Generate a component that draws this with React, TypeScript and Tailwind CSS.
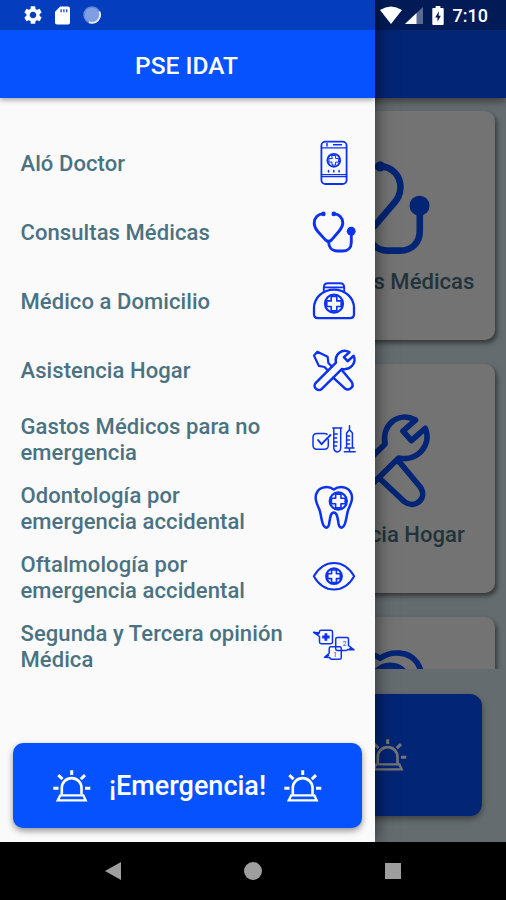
import type { ReactNode } from "react";
import clsx from "clsx";

type IconProps = { className?: string };

function Glyph({ className, children }: { className?: string; children: ReactNode }) {
  return (
    <svg
      viewBox="0 0 48 48"
      fill="none"
      stroke="currentColor"
      strokeWidth={2.3}
      strokeLinecap="round"
      strokeLinejoin="round"
      className={clsx("flex-shrink-0", className)}
    >
      {children}
    </svg>
  );
}

// Medical cross inside a ring, shared by several icons
function CrossBadge({ x, y, r }: { x: number; y: number; r: number }) {
  const s = r / 9;
  return (
    <g transform={`translate(${x} ${y}) scale(${s})`} strokeWidth={2.2 / s}>
      <circle r={9} />
      <path d="M-2.8 -7.2h5.6v4.4h4.4v5.6h-4.4v4.4h-5.6v-4.4h-4.4v-5.6h4.4z" strokeWidth={1.6 / s} />
    </g>
  );
}

function PhoneIcon({ className }: IconProps) {
  return (
    <Glyph className={className}>
      <rect x={11.4} y={2.6} width={25.2} height={42.4} rx={4} strokeWidth={1.8} />
      <path d="M11.4 8.8h25.2M11.4 35.6h25.2M11.4 37.6h25.2" strokeWidth={1.2} />
      <path d="M23.5 5.7h8M17 4.5v2.6" strokeWidth={1.5} />
      <circle cx={23.8} cy={21.3} r={6.4} strokeWidth={1.9} />
      <path d="M22 16.5h3.6v3h3v3.6h-3v3h-3.6v-3h-3v-3.6h3z" strokeWidth={1} />
      <path d="M18.5 31.6v1.4M23.8 31.6v1.4M29.1 31.6v1.4" strokeWidth={1.5} />
    </Glyph>
  );
}

function StethoscopeIcon({ className }: IconProps) {
  return (
    <Glyph className={className}>
      <g strokeWidth={2.9}>
        <path d="M13 5.9C8 6 4.2 10 4.2 15c0 3.6 1.4 5.8 3.6 8.5l7.6 8.4q3.1 3 6.2 0l7.6-8.9c2.3-2.7 3.6-4.6 3.6-8 0-5-3.8-9-8.8-9.1" />
        <path d="M18.6 33.8c0 5.2 3.2 9.2 8.6 9.2h5.4c5.2 0 8.7-3.5 8.7-8.6V24" />
      </g>
      <circle cx={13.4} cy={5.9} r={2.3} fill="currentColor" stroke="none" />
      <circle cx={23.8} cy={5.9} r={2.3} fill="currentColor" stroke="none" />
      <circle cx={41.2} cy={23.2} r={4.4} fill="currentColor" stroke="none" />
    </Glyph>
  );
}

function BagIcon({ className }: IconProps) {
  return (
    <Glyph className={className}>
      <path d="M8 41.2q-4-.2-4-4V31C4 20.5 13 12.6 24 12.6S44 20.5 44 31v6.2q0 3.8-4 4z" />
      <path d="M13.8 15.2V10.2q.2-4 4-4h12.4q3.8 0 4 4v5M14 10.4h20" strokeWidth={1.9} />
      <CrossBadge x={24} y={26.7} r={9} />
    </Glyph>
  );
}

function ToolsIcon({ className }: IconProps) {
  return (
    <Glyph className={className}>
      <g strokeWidth={2.5}>
        <path d="M39.4 6.2C32 2.2 24.4 8.2 26 16.7L5.8 36.8c-3.8 4 2 9.8 6 6L32 22.9c8.2 1.7 14.8-5.7 11.7-13.1L37.6 15.2l-3.7-4.1z" />
        <path d="M21.8 20.6l-3.4-3.6-.8-6.2L7.4 5.8 4 9.6l4.8 10.2 5.8 1.2 3.2 3.6" strokeWidth={2.2} />
        <path d="M32.2 24.5l9.4 11.3c3.2 5-2.4 9.8-7 6.4L23.3 31.6" />
      </g>
    </Glyph>
  );
}

function LabIcon({ className }: IconProps) {
  return (
    <Glyph className={className}>
      <g strokeWidth={1.5}>
        <path d="M18.3 24.5V30.3q0 4-4 4H7q-4 0-4-4V22.5q0-4 4-4h7.3q1.8 0 2.8.8" />
        <path d="M8 25l3.5 4.2 9-9.2" strokeWidth={1.9} />
        <path d="M22.8 13h9M23.8 13v20.3q.3 3.4 3.4 3.6 3.2-.2 3.5-3.6V13" />
        <path d="M24 19h3.2M24 23h2.6M24 27h3.2M24 31h2.6" />
        <path d="M39.5 10.8v4M36.6 33V18l2.9-3.2 2.9 3.2v15zM35 33h9M39.5 33v3.6M34.4 36.8h10.8" />
        <path d="M37 21h2.6M37 25h2.6M37 29h2.6" />
      </g>
    </Glyph>
  );
}

function ToothIcon({ className }: IconProps) {
  return (
    <Glyph className={className}>
      <path
        d="M23.8 5.4C19 2 11 2.2 7.6 7.2c-4 5.8-1 12.2 1.6 17.8 2.2 5.2 2 14.5 5.3 17.7 2 1.9 3.9.6 4.5-2.2.9-4.6 1-12 4.8-12s4 7.4 4.9 12c.6 2.8 2.6 4.1 4.5 2.2 3.3-3.2 3.1-12.5 5.3-17.7 2.6-5.6 5.6-12 1.5-17.8-3.4-5-11.4-5.2-16.2-1.8z"
        strokeWidth={2.5}
      />
      <CrossBadge x={28.3} y={17} r={8.6} />
    </Glyph>
  );
}

function EyeIcon({ className }: IconProps) {
  return (
    <Glyph className={className}>
      <path d="M3.8 23.2C8.5 15 15.5 9.9 24 9.9s15.5 5.1 20.2 13.3C39.5 31.4 32.5 36.5 24 36.5S8.5 31.4 3.8 23.2z" strokeWidth={2} />
      <CrossBadge x={24} y={23.2} r={7.8} />
    </Glyph>
  );
}

function OpinionsIcon({ className }: IconProps) {
  return (
    <Glyph className={className}>
      <g strokeWidth={1.5}>
        <path d="M9.5 14.5L3.6 10.3 9.3 11V10q.3-1.7 2-1.7h9.5q1.7 0 1.7 1.7v10q0 1.7-1.7 1.7h-9.6q-1.7 0-1.7-1.7zM5.5 11l3 1" />
        <path d="M15.9 11.3v7.4M12.2 15h7.4" strokeWidth={2.8} strokeLinecap="butt" />
        <path d="M38.5 23.5l5.5 4.3-6.5-.3q-.5 1-1.7 1h-8.5q-1.6 0-1.6-1.7V17.2q0-1.7 1.6-1.7h9.5q1.7 0 1.7 1.7zM40 26.5l2 .8" />
        <path d="M19.2 31.3l-4.7 4 5.2.2q.4 1.8 1.9 1.8h8q1.7 0 1.7-1.7V26.5q0-1.7-1.7-1.7h-8.7q-1.7 0-1.7 1.7zM18.5 33.5l-1.5 1" />
      </g>
      <g fill="currentColor" stroke="none" fontFamily="Roboto, sans-serif" fontSize={6.5} textAnchor="middle">
        <text x={34.5} y={23.5}>2</text>
        <text x={25} y={34.5}>1</text>
      </g>
    </Glyph>
  );
}

function SirenIcon() {
  return (
    <svg viewBox="0 0 38 32" fill="none" stroke="currentColor" strokeWidth={2.6} className="h-8 w-[38px] flex-shrink-0">
      <path d="M8.8 24.5V18a9.85 9.85 0 0 1 19.7 0v6.5" />
      <path d="M7.2 25.4h23.2l2.3 5H4.7z" strokeWidth={2.3} />
      <path d="M18.7.3v4.8M5.3 5.2l4.2 3.9M32 5.2l-4.2 3.9M.3 18.2h5.2M32 18.2h5.3" strokeWidth={3} />
    </svg>
  );
}

const MENU = [
  { label: "Aló Doctor", icon: PhoneIcon },
  { label: "Consultas Médicas", icon: StethoscopeIcon },
  { label: "Médico a Domicilio", icon: BagIcon },
  { label: "Asistencia Hogar", icon: ToolsIcon },
  { label: "Gastos Médicos para no emergencia", icon: LabIcon },
  { label: "Odontología por emergencia accidental", icon: ToothIcon },
  { label: "Oftalmología por emergencia accidental", icon: EyeIcon },
  { label: "Segunda y Tercera opinión Médica", icon: OpinionsIcon },
];

// Right-hand column of the home grid, the left one sits under the drawer
const CARDS = [MENU[1], MENU[3], MENU[5]];

function StatusBar() {
  return (
    <div className="absolute inset-x-0 top-0 flex h-[30px] items-center justify-between bg-black/25 pr-[18px] pl-[22px] text-white">
      <div className="flex items-center gap-[11px]">
        <svg viewBox="0 0 24 24" fill="currentColor" className="h-[22px] w-[22px]">
          <path d="M19.14 12.94c.04-.3.06-.61.06-.94 0-.32-.02-.64-.07-.94l2.03-1.58c.18-.14.23-.41.12-.61l-1.92-3.32c-.12-.22-.37-.29-.59-.22l-2.39.96c-.5-.38-1.03-.7-1.62-.94l-.36-2.54c-.04-.24-.24-.41-.48-.41h-3.84c-.24 0-.43.17-.47.41l-.36 2.54c-.59.24-1.13.57-1.62.94l-2.39-.96c-.22-.08-.47 0-.59.22L2.74 8.87c-.12.21-.08.47.12.61l2.03 1.58c-.05.3-.09.63-.09.94s.02.64.07.94l-2.03 1.58c-.18.14-.23.41-.12.61l1.92 3.32c.12.22.37.29.59.22l2.39-.96c.5.38 1.03.7 1.62.94l.36 2.54c.05.24.24.41.48.41h3.84c.24 0 .44-.17.47-.41l.36-2.54c.59-.24 1.13-.56 1.62-.94l2.39.96c.22.08.47 0 .59-.22l1.92-3.32c.12-.22.07-.47-.12-.61l-2.01-1.58zM12 15.6c-1.98 0-3.6-1.62-3.6-3.6s1.62-3.6 3.6-3.6 3.6 1.62 3.6 3.6-1.62 3.6-3.6 3.6z" />
        </svg>
        <svg viewBox="0 0 16 20" className="h-[19px] w-[15px]">
          <path d="M5.5.5h8.5q2 0 2 2v15q0 2-2 2H2q-2 0-2-2V6z" fill="currentColor" />
          <path d="M6.5 3.2v3.3M9.5 3.2v3.3M12.5 3.2v3.3" stroke="#0440c4" strokeWidth={1.3} />
        </svg>
        <svg viewBox="0 0 18 18" fill="none" className="ml-0.5 h-[18px] w-[18px]">
          <circle cx={9} cy={9} r={8} fill="#7f9ee2" stroke="#6289dc" strokeWidth={1.5} />
          <path d="M16.3 5.5A8 8 0 0 1 6 16.2" stroke="#e8eeff" strokeWidth={1.8} />
        </svg>
      </div>
      <div className="flex items-center">
        <svg viewBox="0 0 22 18" fill="currentColor" className="h-[18px] w-[22px]">
          <path d="M0 4Q11-3 22 4L11 18z" />
        </svg>
        <svg viewBox="0 0 18 17" fill="currentColor" className="ml-[3px] h-[17px] w-[18px]">
          <path d="M0 17L18 0v17z" opacity={0.35} />
          <path d="M0 17L11.5 6v11z" />
        </svg>
        <svg viewBox="0 0 12 20" className="ml-[9px] h-[19px] w-3">
          <path d="M3.5 0h5v2H11q1 0 1 1v16q0 1-1 1H1q-1 0-1-1V3q0-1 1-1h2.5z" fill="currentColor" />
          <path d="M7 5.5L3 12h2.5v4.5L9 10.3H6.7z" fill="#001c55" />
        </svg>
        <span className="mt-0.5 ml-[9px] text-[18px] leading-none font-medium">7:10</span>
      </div>
    </div>
  );
}

function HomeScreen() {
  return (
    <div className="flex h-[842px] flex-col bg-[#dcebf1]">
      <div className="relative h-[98px] flex-shrink-0 bg-[#0752ff] shadow-[0_3px_8px_rgba(0,0,0,0.45)]" />
      <div className="h-[571px] overflow-hidden">
        <div className="flex flex-col items-end gap-6 pt-[13px] pr-[11px]">
          {CARDS.map(({ label, icon: Icon }) => (
            <div
              key={label}
              className="flex h-[229px] w-[230px] flex-col items-center justify-center gap-[7px] rounded-[10px] bg-[#fafafa] pb-[3px] shadow-[2px_3px_5px_rgba(0,0,0,0.5)]"
            >
              <Icon className="h-[109px] w-[109px] text-[#0752ff]" />
              <span className="text-center text-[22px] leading-[26px] font-medium tracking-[0.05px] text-[#4b7282]">{label}</span>
            </div>
          ))}
        </div>
      </div>
      <div className="mx-6 mt-[25px] flex h-[122px] items-center justify-end rounded-xl bg-[#0752ff] pr-[75px] text-white shadow-[0_3px_6px_rgba(0,0,0,0.4)]">
        <SirenIcon />
      </div>
    </div>
  );
}

function Drawer() {
  return (
    <aside className="absolute top-0 left-0 flex h-[842px] w-[375px] flex-col bg-[#fafafa] shadow-[0_0_18px_rgba(0,0,0,0.6)]">
      <header className="flex h-[98px] flex-shrink-0 items-center justify-center bg-[#0752ff] pt-[34px] pr-[2px] shadow-[0_2px_5px_rgba(0,0,0,0.35)]">
        <h1 className="text-[24.5px] leading-none font-medium text-white">PSE IDAT</h1>
      </header>
      <nav className="mt-[31px] flex flex-col">
        {MENU.map(({ label, icon: Icon }) => (
          <a key={label} className="flex h-[69px] items-center justify-between pr-[17.5px] pl-[20.5px]">
            <span className="w-[270px] text-[22px] leading-[26px] font-medium tracking-[0.08px] text-[#4b7282]">{label}</span>
            <Icon className="mb-0.5 h-12 w-12 text-[#0c32f0]" />
          </a>
        ))}
      </nav>
      <button className="mt-auto mr-[13px] mb-3.5 ml-[13px] flex h-[85px] items-center justify-center gap-[18px] rounded-[10px] bg-[#0752ff] text-white shadow-[0_3px_6px_rgba(0,0,0,0.4)]">
        <SirenIcon />
        <span className="pt-0.5 text-[27px] font-medium">¡Emergencia!</span>
        <SirenIcon />
      </button>
    </aside>
  );
}

function NavBar() {
  return (
    <div className="relative flex h-[58px] items-center justify-between bg-black px-[105px] text-[#9e9e9e]">
      <svg viewBox="0 0 16 18" fill="currentColor" className="h-[18px] w-4">
        <path d="M16 0v18L0 9z" />
      </svg>
      <span className="h-[18px] w-[18px] rounded-full bg-current" />
      <span className="h-4 w-4 bg-current" />
    </div>
  );
}

export default function App() {
  return (
    <div className="relative h-[900px] w-[506px] overflow-hidden bg-black font-[Roboto,sans-serif]">
      <HomeScreen />
      <div className="absolute inset-x-0 top-0 h-[842px] bg-black/54" />
      <Drawer />
      <StatusBar />
      <NavBar />
    </div>
  );
}
